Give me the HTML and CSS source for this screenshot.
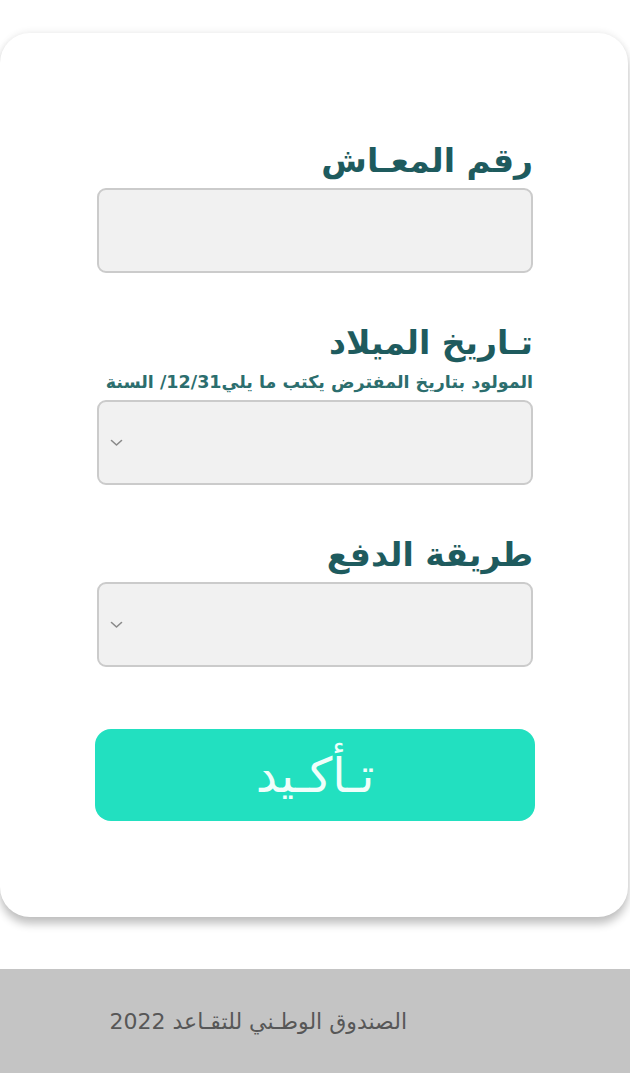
FILE: index.html
```html
<!DOCTYPE html>
<html lang="ar" dir="rtl">
<head>
<meta charset="utf-8">
<title>الصندوق الوطني للتقاعد</title>
<link rel="stylesheet" href="styles.css">
</head>
<body>
<main class="card">
  <form class="form">
    <div class="field field-first">
      <label class="label">رقم المعـاش</label>
      <div class="box"></div>
    </div>
    <div class="field">
      <label class="label">تـاريخ الميلاد</label>
      <p class="hint">المولود بتاريخ المفترض يكتب ما يلي31&rlm;/12/ السنة</p>
      <div class="box select">
        <svg class="chev" width="13" height="8" viewBox="0 0 13 8"><path d="M1.5 1.5 L6.5 6 L11.5 1.5" fill="none" stroke="#8a8a8a" stroke-width="1.6" stroke-linecap="round" stroke-linejoin="round"/></svg>
      </div>
    </div>
    <div class="field">
      <label class="label">طريقة الدفع</label>
      <div class="box select">
        <svg class="chev" width="13" height="8" viewBox="0 0 13 8"><path d="M1.5 1.5 L6.5 6 L11.5 1.5" fill="none" stroke="#8a8a8a" stroke-width="1.6" stroke-linecap="round" stroke-linejoin="round"/></svg>
      </div>
    </div>
    <button type="button" class="btn">تـأكـيد</button>
  </form>
</main>
<footer class="footer">
  <p class="footer-text">الصندوق الوطـني للتقـاعد 2022</p>
</footer>
</body>
</html>
```

FILE: styles.css
```css
html, body {
  margin: 0;
  padding: 0;
  background: #ffffff;
}
body {
  font-family: "DejaVu Sans", "Noto Sans", sans-serif;
  width: 630px;
  overflow-x: hidden;
}
.card {
  margin: 33px 2px 0 0;
  height: 884px;
  box-sizing: border-box;
  background: #ffffff;
  border-radius: 30px;
  box-shadow: 0 7px 9px rgba(0, 0, 0, 0.24), 0 -2px 6px rgba(0, 0, 0, 0.06);
  padding-top: 104px;
  display: flex;
  justify-content: center;
}
.form {
  width: 436px;
  display: flex;
  flex-direction: column;
  margin-left: 2px;
}
.field {
  display: flex;
  flex-direction: column;
  margin-bottom: 46px;
}
.label {
  font-size: 33px;
  font-weight: bold;
  color: #1e5b5e;
  line-height: 48px;
  height: 48px;
  text-align: right;
}
.hint {
  margin: 0;
  font-size: 17.5px;
  font-weight: bold;
  color: #2c6e6e;
  line-height: 30px;
  height: 30px;
  white-space: nowrap;
  text-align: right;
  letter-spacing: -0.2px;
}
.box {
  height: 85px;
  box-sizing: border-box;
  background: #f1f1f1;
  border: 2px solid #cbcbcb;
  border-radius: 9px;
  margin-top: 3px;
}
.select {
  display: flex;
  align-items: center;
  justify-content: flex-end;
  padding-left: 11px;
}
.btn {
  margin-top: 16px;
  height: 92px;
  width: 440px;
  align-self: center;
  border: none;
  border-radius: 16px;
  background: #22e0c0;
  color: #effffb;
  font-family: "DejaVu Sans", sans-serif;
  font-size: 48px;
  font-weight: normal;
  padding: 0;
}
.footer {
  margin-top: 52px;
  height: 104px;
  background: #c4c4c4;
  display: flex;
  align-items: center;
  justify-content: flex-start;
  padding-right: 223px;
}
.footer-text {
  margin: 0;
  font-size: 22px;
  color: #575757;
}
```
